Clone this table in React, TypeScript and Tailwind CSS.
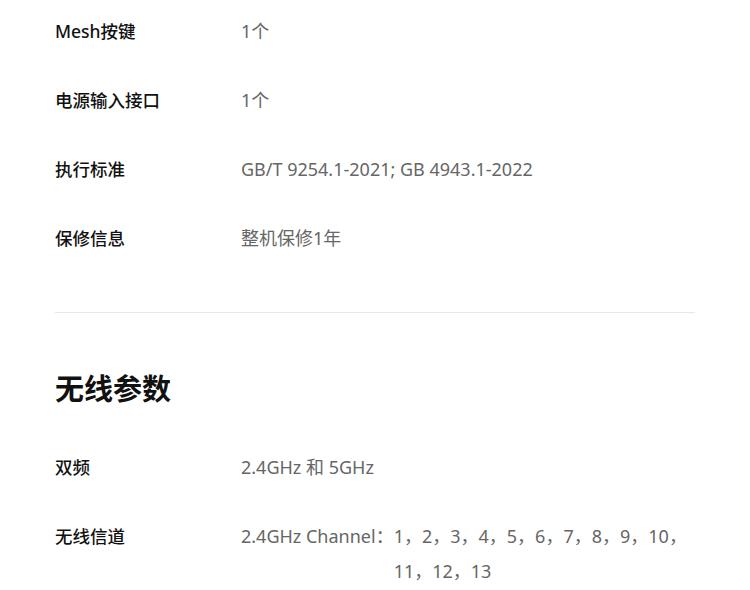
const font = {
  fontFamily: '"Noto Sans", "Noto Sans CJK SC", sans-serif',
};

type Spec = { label: string; value: React.ReactNode };

const general: Spec[] = [
  { label: "Mesh按键", value: "1个" },
  { label: "电源输入接口", value: "1个" },
  { label: "执行标准", value: "GB/T 9254.1-2021; GB 4943.1-2022" },
  { label: "保修信息", value: "整机保修1年" },
];

const wireless: Spec[] = [
  { label: "双频", value: "2.4GHz 和 5GHz" },
  {
    label: "无线信道",
    value: (
      <div className="flex">
        <span className="shrink-0">2.4GHz Channel：</span>
        <span>1，2，3，4，5，6，7，8，9，10，11，12，13</span>
      </div>
    ),
  },
];

function SpecRow({ spec }: { spec: Spec }) {
  return (
    <div className="flex leading-[35px]">
      <div className="w-[186px] shrink-0 text-[17.5px] font-medium text-[#111]">
        {spec.label}
      </div>
      <div className="min-w-0 flex-1 text-[18px] text-[#666]">{spec.value}</div>
    </div>
  );
}

export default function App() {
  return (
    <div className="min-h-[590px] w-[750px] bg-white" style={font}>
      <div className="px-[55px] pt-[14px]">
        <div className="flex flex-col gap-[34px]">
          {general.map((s) => (
            <SpecRow key={s.label} spec={s} />
          ))}
        </div>

        <div className="mt-[56px] h-px bg-[#e8e8e8]" />

        {/* Wireless section */}
        <h2 className="mt-[56px] text-[29px] font-bold leading-[40px] text-[#111]">
          无线参数
        </h2>
        <div className="mt-[41px] flex flex-col gap-[34px]">
          {wireless.map((s) => (
            <SpecRow key={s.label} spec={s} />
          ))}
        </div>
      </div>
    </div>
  );
}
